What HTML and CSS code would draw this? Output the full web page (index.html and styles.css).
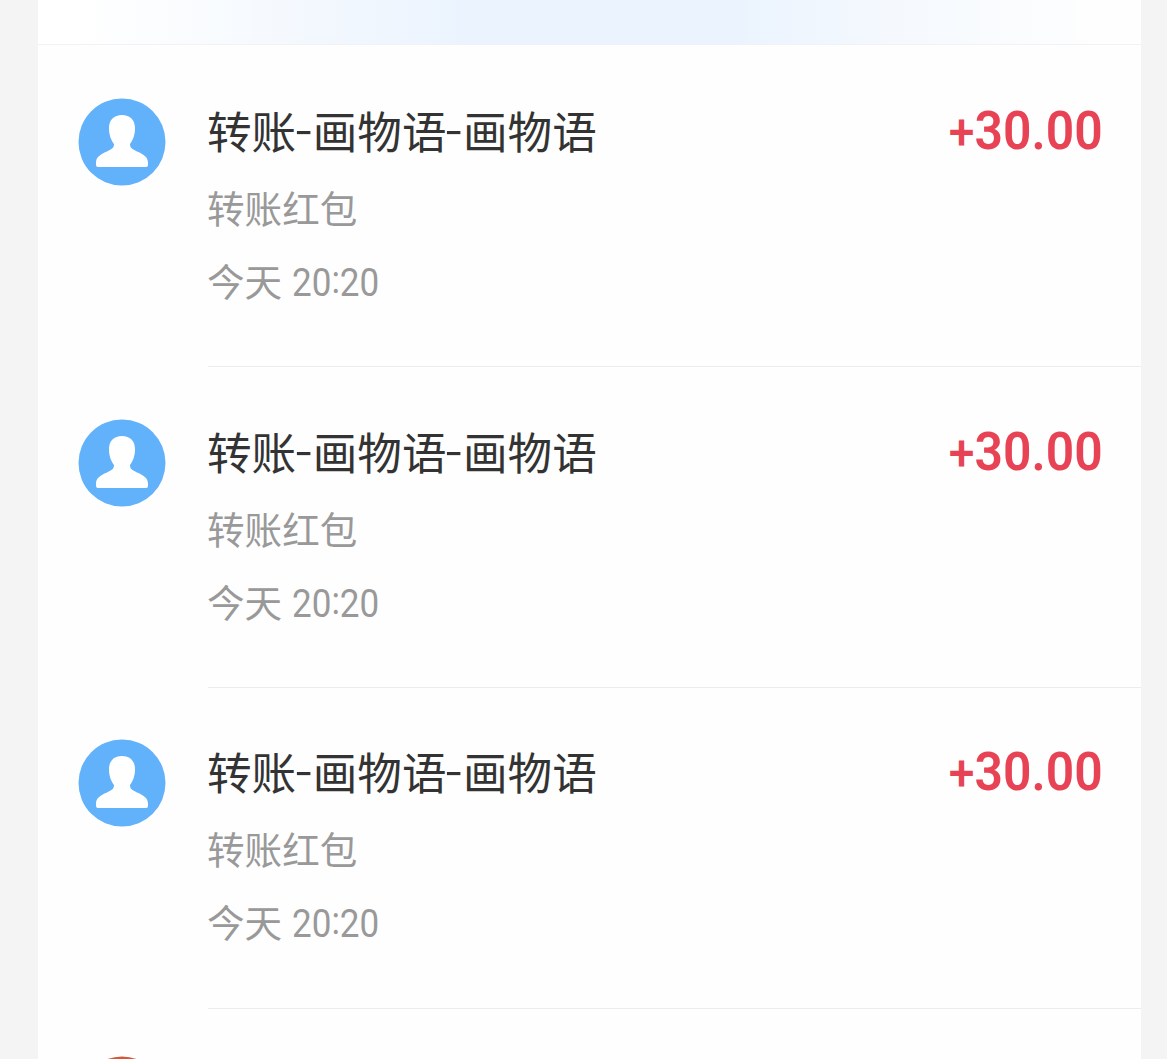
FILE: index.html
```
<!DOCTYPE html>
<html lang="zh-CN">
<head>
  <meta charset="UTF-8">
  <meta name="viewport" content="width=device-width, initial-scale=1.0">
  <title>账单</title>
  <link rel="stylesheet" href="styles.css">
</head>
<body>
  <div class="card">
    <div class="card-header"></div>

    <div class="record first">
      <svg class="avatar" viewBox="0 0 88 88">
        <circle cx="44" cy="44" r="43.5" fill="#62b1fb"/>
        <path d="M44 17C36 17 31 22 31 30C31 37 33 42 36 46C36 50 34 51 29 53.500C22 56.500 18 59 18 65V67Q18 69 20 69H68Q70 69 70 67V65C70 59 66 56.500 59 53.500C54 51 52 50 52 46C55 42 57 37 57 30C57 22 52 17 44 17Z" fill="#fff"/>
      </svg>
      <div class="detail">
        <div class="main">
          <div class="title">转账<span class="dash">-</span>画物语<span class="dash">-</span>画物语</div>
          <div class="amount"><span class="sign">+</span>30.00</div>
        </div>
        <div class="category">转账红包</div>
        <div class="time">今天 <span class="clock">20<span class="colon">:</span>20</span></div>
      </div>
    </div>

    <div class="record second">
      <svg class="avatar" viewBox="0 0 88 88">
        <circle cx="44" cy="44" r="43.5" fill="#62b1fb"/>
        <path d="M44 17C36 17 31 22 31 30C31 37 33 42 36 46C36 50 34 51 29 53.500C22 56.500 18 59 18 65V67Q18 69 20 69H68Q70 69 70 67V65C70 59 66 56.500 59 53.500C54 51 52 50 52 46C55 42 57 37 57 30C57 22 52 17 44 17Z" fill="#fff"/>
      </svg>
      <div class="detail">
        <div class="main">
          <div class="title">转账<span class="dash">-</span>画物语<span class="dash">-</span>画物语</div>
          <div class="amount"><span class="sign">+</span>30.00</div>
        </div>
        <div class="category">转账红包</div>
        <div class="time">今天 <span class="clock">20<span class="colon">:</span>20</span></div>
      </div>
    </div>

    <div class="record third">
      <svg class="avatar" viewBox="0 0 88 88">
        <circle cx="44" cy="44" r="43.5" fill="#62b1fb"/>
        <path d="M44 17C36 17 31 22 31 30C31 37 33 42 36 46C36 50 34 51 29 53.500C22 56.500 18 59 18 65V67Q18 69 20 69H68Q70 69 70 67V65C70 59 66 56.500 59 53.500C54 51 52 50 52 46C55 42 57 37 57 30C57 22 52 17 44 17Z" fill="#fff"/>
      </svg>
      <div class="detail">
        <div class="main">
          <div class="title">转账<span class="dash">-</span>画物语<span class="dash">-</span>画物语</div>
          <div class="amount"><span class="sign">+</span>30.00</div>
        </div>
        <div class="category">转账红包</div>
        <div class="time">今天 <span class="clock">20<span class="colon">:</span>20</span></div>
      </div>
    </div>

    <!-- next record, cut off by the bottom of the screen -->
    <div class="record next">
      <svg class="avatar" viewBox="0 0 88 88">
        <circle cx="44" cy="44" r="43.5" fill="#d4583a"/>
      </svg>
    </div>
  </div>
</body>
</html>
```
FILE: styles.css
```
* {
  box-sizing: border-box;
}
body {
  margin: 0;
  height: 1059px;
  overflow: hidden;
  background-color: #f4f4f4;
  font-family: "Noto Sans CJK SC", sans-serif;
}
.card {
  width: 1103px;
  height: 1059px;
  margin-left: 38px;
  background-color: #fefefe;
  overflow: hidden;
}
.card-header {
  height: 45px;
  border-bottom: 1px solid #f0f2f5;
  background: linear-gradient(to right, #fff 3%, #f5f9fe 22%, #eaf3fe 40%, #eaf3fe 62%, #f5f9fe 78%, #fefefe 97%);
}
.record {
  display: flex;
  height: 321px;
  padding-left: 40px;
}
.avatar {
  flex: none;
  width: 88px;
  height: 88px;
  margin-right: 42px;
}
.detail {
  flex: 1;
  border-bottom: 1px solid #ececec;
}
.first {
  height: 322px;
}
.first .avatar {
  margin-top: 53px;
}
.first .detail {
  padding-top: 53px;
}
.second .avatar,
.second .detail {
  margin-top: 52px;
}
.third .avatar,
.third .detail {
  margin-top: 51px;
}
.main {
  display: flex;
  justify-content: space-between;
  height: 64px;
  line-height: 63px;
  padding-right: 38px;
}
.title {
  margin-left: -1px;
  font-size: 44.6px;
  color: #333;
}
.dash {
  display: inline-block;
  margin-right: 1px;
  transform: translateY(-4px) scaleX(1.18);
}
.amount {
  font-family: Roboto, sans-serif;
  font-size: 53px;
  font-weight: 600;
  line-height: 67px;
  color: #e74355;
  transform: scaleX(0.94);
  transform-origin: right;
}
.sign {
  display: inline-block;
  font-weight: 500;
  transform: translate(1px, 1px) scale(0.93);
}
.category,
.time {
  height: 73px;
  line-height: 73px;
  margin-left: -1px;
  font-size: 37.6px;
  color: #999;
}
.category {
  margin-top: 8px;
}
.clock {
  display: inline-block;
  font-family: Roboto, sans-serif;
  font-size: 38.5px;
  transform: translateX(1px) scaleX(0.91);
  transform-origin: left;
}
.colon {
  display: inline-block;
  transform: translateY(-3px);
}
.next {
  height: 60px;
}
.next .avatar {
  margin-top: 47px;
}
```
